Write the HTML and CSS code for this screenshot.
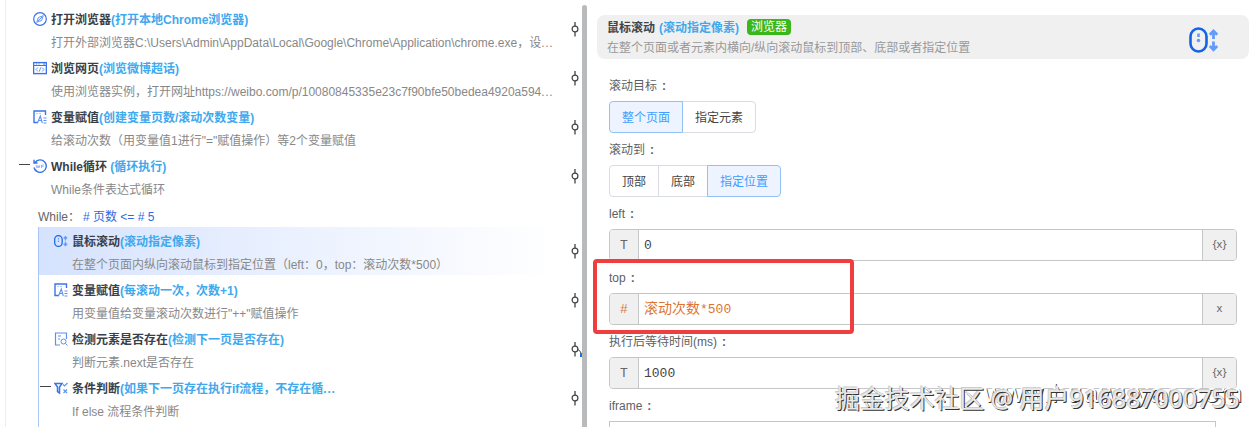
FILE: index.html
```html
<!DOCTYPE html>
<html lang="zh-CN">
  <head>
    <meta charset="UTF-8" />
    <meta name="viewport" content="width=device-width, initial-scale=1.0" />
    <title>流程编辑器</title>
    <link rel="stylesheet" href="styles.css" />
  </head>
  <body>
    <!-- Shared icons -->
    <svg class="sprite">
      <symbol id="icon-var" viewBox="0 0 14 14">
        <path d="M5 12.5H1V1h11.500v4" fill="none" stroke="#3a74e8" stroke-width="1.4" />
        <path d="M3.500 3.500h1M6.500 3.500h1" stroke="#6d9cf2" />
        <path d="M4.500 13 7.300 6l2 7M5.500 10.500h3.200M10.500 8h3M10.500 10.500h3M10.500 13h3" fill="none" stroke="#5f93f3" stroke-width="1.100" />
      </symbol>
      <symbol id="icon-mouse" viewBox="0 0 30 28">
        <rect x="1.500" y="2.500" width="16" height="23" rx="8" fill="none" stroke="#1463e6" stroke-width="2.600" />
        <path d="M9.500 7.500v3.500" stroke="#639cf7" stroke-width="2.600" />
        <circle cx="9.500" cy="14.500" r="1.800" fill="#639cf7" />
        <path d="M24.500 5v8M20.800 8.800l3.700-3.800 3.700 3.800M24.500 15.500v8M20.800 20l3.700 3.800 3.700-3.800" fill="none" stroke="#639cf7" stroke-width="2.800" />
      </symbol>
      <symbol id="icon-node" viewBox="0 0 8 16">
        <path d="M4 1v4M4 11v4.500" stroke="#444" stroke-width="1.300" />
        <circle cx="4" cy="8" r="2.900" fill="#fff" stroke="#444" stroke-width="1.200" />
      </symbol>
    </svg>

    <div class="page">
      <div class="flow">
        <div class="step">
          <svg class="icon" viewBox="0 0 14 14" fill="none" stroke="#3a74e8">
            <circle cx="7" cy="7" r="6.300" stroke-width="1.200" />
            <path d="M10.300 3.700 8.500 8.500 3.700 10.300 5.500 5.500zM5 9l4-4" stroke="#5f93f3" />
          </svg>
          <div class="text">
            <p class="name">打开浏览器<span>(打开本地Chrome浏览器)</span></p>
            <p class="desc">打开外部浏览器C:\Users\Admin\AppData\Local\Google\Chrome\Application\chrome.exe，设<i>...</i></p>
          </div>
          <svg class="node"><use href="#icon-node" /></svg>
        </div>
        <div class="step">
          <svg class="icon" viewBox="0 0 14 14" fill="none" stroke="#3a74e8">
            <rect x=".6" y="1.600" width="12.800" height="11" stroke-width="1.400" />
            <path d="M1 4.500h12M3 3h1M5.500 3h1M10 3h2" />
            <path d="M5 6.500 3 8.500l2 2M9 6.500l2 2-2 2M7.700 6.500l-1.400 4" stroke="#5f93f3" />
          </svg>
          <div class="text">
            <p class="name">浏览网页<span>(浏览微博超话)</span></p>
            <p class="desc">使用浏览器实例，打开网址https://weibo.com/p/10080845335e23c7f90bfe50bedea4920a594<i>...</i></p>
          </div>
          <svg class="node"><use href="#icon-node" /></svg>
        </div>
        <div class="step">
          <svg class="icon"><use href="#icon-var" /></svg>
          <div class="text">
            <p class="name">变量赋值<span>(创建变量页数/滚动次数变量)</span></p>
            <p class="desc">给滚动次数（用变量值1进行"="赋值操作）等2个变量赋值</p>
          </div>
          <svg class="node"><use href="#icon-node" /></svg>
        </div>
        <div class="step">
          <i class="collapse"></i>
          <svg class="icon" viewBox="0 0 14 14" fill="none" stroke="#3a74e8">
            <path d="M2 3.500a6.200 6.200 0 1 1-1 5M1 .8v3.200h3.500" stroke-width="1.400" />
            <path d="M3 6l1 3 1-2.500L6 9l1-3M8.500 9V6h2.500M8.500 7.500h2" stroke="#8cb2f7" stroke-width=".9" />
          </svg>
          <div class="text">
            <p class="name">While循环 <span>(循环执行)</span></p>
            <p class="desc">While条件表达式循环</p>
          </div>
          <svg class="node"><use href="#icon-node" /></svg>
        </div>
        <div class="condition">While：<span># 页数 &lt;= # 5</span></div>

        <div class="children">
          <div class="step active">
            <svg class="icon"><use href="#icon-mouse" /></svg>
            <div class="text">
              <p class="name">鼠标滚动<span>(滚动指定像素)</span></p>
              <p class="desc">在整个页面内纵向滚动鼠标到指定位置（left：0，top：滚动次数*500）</p>
            </div>
            <svg class="node"><use href="#icon-node" /></svg>
          </div>
          <div class="step">
            <svg class="icon"><use href="#icon-var" /></svg>
            <div class="text">
              <p class="name">变量赋值<span>(每滚动一次，次数+1)</span></p>
              <p class="desc">用变量值给变量滚动次数进行"++"赋值操作</p>
            </div>
            <svg class="node"><use href="#icon-node" /></svg>
          </div>
          <div class="step">
            <svg class="icon" viewBox="0 0 14 14" fill="none" stroke="#5f8ff0">
              <path d="M6 13H1.500V1h11v6" stroke-width="1.200" />
              <path d="M4 4h3M4 7h2" />
              <circle cx="9.500" cy="9.500" r="2.500" />
              <path d="m11.500 11.500 2 2" />
            </svg>
            <div class="text">
              <p class="name">检测元素是否存在<span>(检测下一页是否存在)</span></p>
              <p class="desc">判断元素.next是否存在</p>
            </div>
            <svg class="node"><use href="#icon-node" /></svg>
            <svg class="link" viewBox="0 0 5 9">
              <path d="M0 1q3 1 4 4" fill="none" stroke="#444" />
              <path d="M3 5h2v4H3z" fill="#1676e0" />
            </svg>
          </div>
          <div class="step">
            <i class="collapse"></i>
            <svg class="icon" viewBox="0 0 14 14" fill="none" stroke="#3a74e8">
              <path d="M1 2.500h7L5.500 6v6L3.500 10.500V6z" stroke-width="1.500" />
              <path d="m9 3.500 1.500 1.500 3-3M9.500 8.500l3.500 3.500M13 8.500 9.500 12" stroke="#5f93f3" stroke-width="1.200" />
            </svg>
            <div class="text">
              <p class="name">条件判断<span>(如果下一页存在执行if流程，不存在循<i>...</i></span></p>
              <p class="desc">If else 流程条件判断</p>
            </div>
            <svg class="node"><use href="#icon-node" /></svg>
          </div>
        </div>
      </div>

      <div class="splitter"></div>

      <div class="panel">
        <div class="header">
          <div>
            <p class="title">鼠标滚动 <span>(滚动指定像素)</span><b class="tag">浏览器</b></p>
            <p class="subtitle">在整个页面或者元素内横向/纵向滚动鼠标到顶部、底部或者指定位置</p>
          </div>
          <svg class="header-icon"><use href="#icon-mouse" /></svg>
        </div>

        <div class="form">
          <div class="field">
            <label>滚动目标<em>:</em></label>
            <div class="radio-group">
              <button class="checked">整个页面</button>
              <button>指定元素</button>
            </div>
          </div>
          <div class="field">
            <label>滚动到<em>:</em></label>
            <div class="radio-group">
              <button>顶部</button>
              <button>底部</button>
              <button class="checked">指定位置</button>
            </div>
          </div>
          <div class="field">
            <label>left<em>:</em></label>
            <div class="input">
              <span class="prefix">T</span>
              <span class="value">0</span>
              <span class="suffix">{x}</span>
            </div>
          </div>
          <div class="field marked">
            <label>top<em>:</em></label>
            <div class="input expression">
              <span class="prefix">#</span>
              <span class="value"><span class="variable">滚动次数</span>*500</span>
              <span class="suffix">x</span>
            </div>
          </div>
          <div class="field">
            <label>执行后等待时间(ms)<em>:</em></label>
            <div class="input">
              <span class="prefix">T</span>
              <span class="value">1000</span>
              <span class="suffix">{x}</span>
            </div>
          </div>
          <div class="field last">
            <label>iframe<em>:</em></label>
            <div class="frame-box"></div>
          </div>
        </div>
      </div>
    </div>

    <div class="watermark site">www.huawuyao.com</div>
    <div class="watermark">掘金技术社区 @ 用户916887000755</div>
  </body>
</html>
```

FILE: styles.css
```css
* {
  margin: 0;
  padding: 0;
  box-sizing: border-box;
}

body {
  height: 427px;
  overflow: hidden;
  position: relative;
  background: #fff;
  font-family: "Liberation Sans", "Noto Sans CJK SC", sans-serif;
  font-size: 12px;
  color: #555;
}

.sprite {
  display: none;
}

.page {
  display: flex;
  height: 427px;
  overflow: hidden;
}

/* Flow tree */
.flow {
  display: flex;
  flex-direction: column;
  width: 577px;
  margin-left: 5px;
  padding-top: 5px;
  border-left: 1px solid #ebedf0;
  flex-shrink: 0;
}

.step {
  display: flex;
  position: relative;
  height: 49px;
  padding-left: 27px;
  flex-shrink: 0;
}

.icon {
  width: 14px;
  height: 14px;
  margin: 7px 4px 0 0;
  flex-shrink: 0;
}

.text {
  flex: 1;
  white-space: nowrap;
}

.name {
  height: 24px;
  line-height: 30px;
  font-weight: bold;
  color: #3a3f48;
}

.name span {
  color: #40a9ee;
}

.text i {
  font-style: normal;
  letter-spacing: 0.7px;
}

.desc {
  height: 24px;
  line-height: 29px;
  color: #888;
}

.node {
  width: 8px;
  height: 16px;
  margin: 16px 3px 0 0;
}

.collapse {
  width: 11px;
  height: 1px;
  margin: 12px 3px 0 -14px;
  background: #444;
}

.condition {
  height: 26px;
  padding-left: 32px;
  line-height: 32px;
  color: #666;
  flex-shrink: 0;
}

.condition span {
  margin-left: 3px;
  color: #2f6ae0;
}

.children {
  flex: 1;
  margin-left: 32px;
  border-left: 1px solid #a9c6f7;
}

.children .step {
  padding-left: 15px;
}

.active {
  background: linear-gradient(to right, #d6e3fe, #fff 95%) no-repeat 0 0 / 100% 48px;
}

.link {
  position: absolute;
  right: 0;
  top: 23px;
  width: 5px;
  height: 9px;
}

.splitter {
  width: 5px;
  margin-top: 5px;
  background: #b9babc;
  border-radius: 3px 3px 0 0;
  flex-shrink: 0;
}

/* Properties panel */
.panel {
  flex: 1;
  padding: 15px 6px 0 10px;
}

.header {
  display: flex;
  justify-content: space-between;
  height: 44px;
  padding: 4px 30px 0 10px;
  background: #f0f0f0;
  border-radius: 8px;
}

.title {
  display: flex;
  height: 17px;
  line-height: 18px;
  font-weight: bold;
  color: #40444c;
}

.title span {
  margin-left: 4px;
  color: #40a9ee;
}

.tag {
  height: 16px;
  margin-left: 8px;
  padding: 0 4px;
  line-height: 17px;
  font-weight: normal;
  color: #fff;
  background: #39b71b;
  border-radius: 4px;
}

.subtitle {
  line-height: 24px;
  color: #999;
}

.header-icon {
  width: 30px;
  height: 28px;
  margin-top: 7px;
}

.form {
  padding: 12px 6px 0 12px;
}

.field {
  height: 64px;
  position: relative;
}

.field.last {
  height: 36px;
  overflow: hidden;
}

label {
  display: block;
  height: 30px;
  line-height: 30px;
  color: #5c5f66;
}

label em {
  margin-left: 5px;
  font-style: normal;
  font-weight: bold;
}

.radio-group {
  display: flex;
}

.radio-group button {
  height: 32px;
  padding: 0 12px 2px;
  margin-right: -1px;
  font: inherit;
  color: #444;
  background: #fff;
  border: 1px solid #d9dce2;
}

.radio-group button:first-child {
  border-radius: 4px 0 0 4px;
}

.radio-group button:last-child {
  border-radius: 0 4px 4px 0;
}

.radio-group .checked {
  z-index: 1;
  color: #409eff;
  background: #edf3ff;
  border-color: #92c1f5;
}

.input {
  display: flex;
  width: 628px;
  height: 32px;
  border: 1px solid #c5c6c8;
  border-radius: 4px;
  line-height: 30px;
  overflow: hidden;
}

.prefix,
.suffix {
  width: 29px;
  text-align: center;
  color: #666;
  background: #f0f0f0;
  border-right: 1px solid #c5c6c8;
}

.prefix {
  font-family: "Liberation Mono", monospace;
  font-size: 13px;
  line-height: 32px;
}

.suffix {
  width: 34px;
  font-family: "Noto Sans", sans-serif;
  font-size: 11px;
  line-height: 28px;
  border-right: none;
  border-left: 1px solid #c5c6c8;
}

.value {
  flex: 1;
  padding-left: 5px;
  font-family: "Liberation Mono", "Noto Sans CJK SC", monospace;
  font-size: 13px;
  line-height: 32px;
  color: #444;
}

.variable {
  font-size: 14px;
  line-height: 30px;
}

.expression .value {
  line-height: 30px;
}

.expression .prefix,
.expression .value {
  color: #dc7434;
}

/* Red frame over the highlighted field */
.marked::after {
  content: "";
  box-sizing: border-box;
  position: absolute;
  left: -16px;
  top: -4px;
  width: 261px;
  height: 75px;
  border: 4px solid #ee3f3e;
  border-radius: 4px;
}

.frame-box {
  width: 607px;
  height: 32px;
  border: 1px solid #c5c6c8;
}

.watermark {
  position: absolute;
  left: 835px;
  top: 380px;
  line-height: 36px;
  white-space: nowrap;
  font-family: "Noto Sans", "Noto Sans CJK SC", sans-serif;
  font-size: 25px;
  letter-spacing: -0.1px;
  color: #e8e8e8;
  text-shadow: 1px 1px 0 #333, -1px -1px 0 #ccc;
}

.watermark.site {
  left: 984px;
  top: 375px;
  font-family: "Liberation Sans", sans-serif;
  font-size: 26px;
  letter-spacing: 1.4px;
  color: #fff;
  text-shadow: 1px 1px 0 #333;
}
```
